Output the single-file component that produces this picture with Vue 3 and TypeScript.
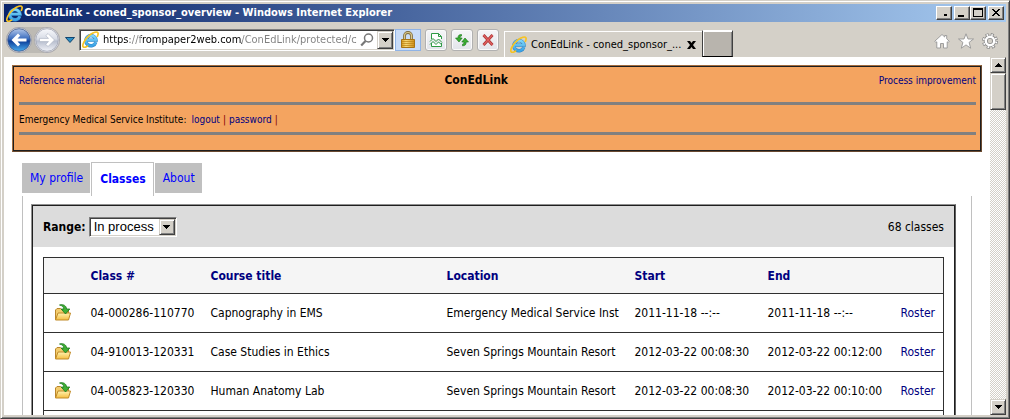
<script setup lang="ts">
import { ref } from 'vue'

interface ClassRow {
  id: string
  title: string
  location: string
  start: string
  end: string
}

const address = ref('https://frompaper2web.com/ConEdLink/protected/coned_sponsor_overview')
const range = ref('In process')
const activeTab = ref('Classes')
const tabs: string[] = ['My profile', 'Classes', 'About']

const rows: ClassRow[] = [
  { id: '04-000286-110770', title: 'Capnography in EMS', location: 'Emergency Medical Service Inst', start: '2011-11-18 --:--', end: '2011-11-18 --:--' },
  { id: '04-910013-120331', title: 'Case Studies in Ethics', location: 'Seven Springs Mountain Resort', start: '2012-03-22 00:08:30', end: '2012-03-22 00:12:00' },
  { id: '04-005823-120330', title: 'Human Anatomy Lab', location: 'Seven Springs Mountain Resort', start: '2012-03-22 00:08:30', end: '2012-03-22 00:10:00' },
]
</script>

<template>
  <svg class="defs" aria-hidden="true">
    <defs>
      <linearGradient id="ieBlue" x1="0" y1="0" x2="0" y2="1">
        <stop offset="0" stop-color="#7ed6f8" />
        <stop offset="1" stop-color="#3aa3e6" />
      </linearGradient>
      <linearGradient id="backBlue" x1="0" y1="0" x2="0" y2="1">
        <stop offset="0" stop-color="#b4c8ea" />
        <stop offset="0.45" stop-color="#3a6bbd" />
        <stop offset="0.55" stop-color="#0d3f9a" />
        <stop offset="1" stop-color="#4aaef0" />
      </linearGradient>
      <linearGradient id="fwdGrey" x1="0" y1="0" x2="0" y2="1">
        <stop offset="0" stop-color="#f8f9fc" />
        <stop offset="0.45" stop-color="#d8dce6" />
        <stop offset="0.55" stop-color="#b8bece" />
        <stop offset="1" stop-color="#f1f3f8" />
      </linearGradient>
      <linearGradient id="gold" x1="0" y1="0" x2="0" y2="1">
        <stop offset="0" stop-color="#fff3b0" />
        <stop offset="1" stop-color="#f5bd40" />
      </linearGradient>
      <linearGradient id="brass" x1="0" y1="0" x2="1" y2="0">
        <stop offset="0" stop-color="#d89a1c" />
        <stop offset="0.35" stop-color="#f9dc7c" />
        <stop offset="1" stop-color="#d08c14" />
      </linearGradient>
      <symbol id="ie" viewBox="0 0 16 16">
        <path d="M13 10.600A4.800 4.800 0 1 1 13.200 8.600H4.600" fill="none" stroke="#2f86c8" stroke-width="3.200" />
        <path d="M13 10.600A4.800 4.800 0 1 1 13.200 8.600H4.600" fill="none" stroke="url(#ieBlue)" stroke-width="2.300" />
        <path d="M5.200 14.200C3.400 15.400 1.900 15.700 1.200 15 -.3 13.500 2.600 7.500 7.200 3.800 10.800 1 14.200.2 15 1.700c.4.800.1 2-.5 3.300" fill="none" stroke="#f7c322" stroke-width="1.600" stroke-linecap="round" />
      </symbol>
    </defs>
  </svg>

  <div class="window">
    <header class="titlebar">
      <svg class="ie-icon"><use href="#ie" /></svg>
      <span class="title">ConEdLink - coned_sponsor_overview - Windows Internet Explorer</span>
      <div class="winbuttons">
        <button class="wb spaced" aria-label="Hide"><svg viewBox="0 0 12 10"><path d="M6 6h3v2H6z" /></svg></button>
        <button class="wb" aria-label="Minimize"><svg viewBox="0 0 12 10"><path d="M2 7h6v2H2z" /></svg></button>
        <button class="wb spaced" aria-label="Maximize"><svg viewBox="0 0 12 10"><path d="M1 0h10v9H1zM2 2v6h8V2z" fill-rule="evenodd" /></svg></button>
        <button class="wb" aria-label="Close"><svg viewBox="0 0 12 10"><path d="M2 1h2v1h1v1h2V2h1V1h2v1H9v1H8v1H7v1h1v1h1v1h1v1H8V7H7V6H5v1H4v1H2V7h1V6h1V5h1V4H4V3H3V2H2z" /></svg></button>
      </div>
    </header>

    <nav class="toolbar" aria-label="Browser">
      <div class="navpair">
        <button class="round" aria-label="Back">
          <svg viewBox="0 0 26 26"><circle cx="13" cy="13" r="12.500" fill="#f4f2f0" stroke="#8b8fa0" stroke-width=".8" /><circle cx="13" cy="13" r="11.300" fill="url(#backBlue)" stroke="#3c5688" stroke-width=".8" /><path d="M5.500 13l6.500-6.500 2.200 2.200-2.700 2.700H20.500v3.200h-9l2.700 2.700L12 19.500z" fill="#fff" /></svg>
        </button>
        <button class="round" aria-label="Forward">
          <svg viewBox="0 0 26 26"><circle cx="13" cy="13" r="12.500" fill="#f4f2f0" stroke="#9a9ca6" stroke-width=".8" /><circle cx="13" cy="13" r="11.300" fill="url(#fwdGrey)" stroke="#9aa0b0" stroke-width=".8" /><path d="M20.500 13L14 6.500l-2.200 2.200 2.700 2.700H5.500v3.200h9l-2.700 2.700 2.200 2.200z" fill="#fff" stroke="#a6adbd" stroke-width=".6" /></svg>
        </button>
      </div>
      <button class="recent" aria-label="Recent pages"><svg viewBox="0 0 10 6"><path d="M.5.5h9L5 5.500z" fill="#2c8fc4" stroke="#12456f" /></svg></button>
      <div class="address">
        <svg class="ie-icon"><use href="#ie" /></svg>
        <input v-model="address" class="url" type="text" aria-label="Address" />
        <button class="find" aria-label="Search"><svg viewBox="0 0 14 14"><circle cx="8.500" cy="5" r="4" fill="none" stroke="#777" stroke-width="1.500" /><path d="M5.500 8L1.200 12.500" stroke="#777" stroke-width="2.200" /></svg></button>
        <button class="arrow" aria-label="Show address list"><svg viewBox="0 0 7 4"><path d="M0 0h7v1H6v1H5v1H4v1H3V3H2V2H1V1H0z" /></svg></button>
      </div>
      <button class="lock" aria-label="Security report">
        <svg viewBox="0 0 16 18"><path d="M4.500 9V5a3.500 3.500 0 0 1 7 0v4" fill="none" stroke="#7d6a3c" stroke-width="2.800" /><path d="M4.500 9V5a3.500 3.500 0 0 1 7 0v4" fill="none" stroke="#d9c78c" stroke-width="1.200" /><path d="M1.500 8.500h13v8h-13z" fill="url(#brass)" stroke="#a87414" /><path d="M2 10.500h12M2 12.500h12M2 14.500h12" stroke="#b98213" stroke-opacity=".7" /></svg>
      </button>
      <div class="tools">
        <button class="tool" aria-label="Compatibility view"><svg viewBox="0 0 14 14"><path d="M2.500 6V.5h7l3 3V6M2.500 10v3.500h10V10M9.500.5v3h3" fill="#fff" stroke="#2e9a44" /><path d="M1 8.500L4 5.500l3 3 2.500-2.500 3.500 3.500M1 11.500l3-3 3 3 2.500-2.500 3.500 3" fill="none" stroke="#2e9a44" /></svg></button>
        <button class="tool" aria-label="Refresh"><svg viewBox="0 0 14 14"><path d="M6.500 1.500C4 1.500 3 2.500 3 5H.5L4 9l3.200-4H5c0-1.200.4-1.800 1.500-2z" fill="#3cae34" stroke="#167216" stroke-width=".6" /><path d="M7.500 12.800c2.500 0 3.700-1 3.700-3.800h2.300L10 5 6.800 9H9c0 1.200-.4 2-1.500 2.200z" fill="#3cae34" stroke="#167216" stroke-width=".6" /></svg></button>
        <button class="tool" aria-label="Stop"><svg viewBox="0 0 14 14"><path d="M2.500 2l9 10M11.500 2l-9 10" stroke="#a83434" stroke-width="2.800" /><path d="M2.500 2l9 10M11.500 2l-9 10" stroke="#e26060" stroke-width="1.200" /></svg></button>
      </div>
      <div class="browsertab">
        <svg class="ie-icon"><use href="#ie" /></svg>
        <span class="tabtitle">ConEdLink - coned_sponsor_...</span>
        <button class="closetab" aria-label="Close tab"><svg viewBox="0 0 9 8"><path d="M0 0h3l1.500 2L6 0h3L6 4l3 4H6L4.500 6 3 8H0l3-4z" /></svg></button>
      </div>
      <button class="newtab" aria-label="New tab"></button>
      <div class="commands">
        <button class="cmd" aria-label="Home"><svg viewBox="0 0 16 16"><path d="M8 1.500L.8 8.200l1 1.300 1-.7v6.200h3.700v-4.500h3V15h3.700V8.800l1 .7 1-1.300L12.700 5.800V2.500h-2v1.500z" fill="#fff" stroke="#969696" stroke-width=".9" /></svg></button>
        <button class="cmd" aria-label="Favorites"><svg viewBox="0 0 16 16"><path d="M8 .8l2 5.200h5.500l-4.400 3.400 1.600 5.800L8 11.900l-4.700 3.300 1.600-5.800L.5 6H6z" fill="#fff" stroke="#969696" stroke-width=".9" /></svg></button>
        <button class="cmd" aria-label="Tools"><svg viewBox="0 0 16 16"><circle cx="8" cy="8" r="6.400" fill="none" stroke="#8b8b8b" stroke-width="3.200" stroke-dasharray="2.900 2.126" /><circle cx="8" cy="8" r="4.200" fill="none" stroke="#8b8b8b" stroke-width="4" /><circle cx="8" cy="8" r="6.400" fill="none" stroke="#fff" stroke-width="1.800" stroke-dasharray="1.500 3.526" stroke-dashoffset="-.7" /><circle cx="8" cy="8" r="4.200" fill="none" stroke="#fff" stroke-width="2.400" /></svg></button>
      </div>
    </nav>

    <div class="viewport">
      <main class="page">
        <section class="banner">
          <div class="bannertop">
            <a href="#reference">Reference material</a>
            <h1>ConEdLink</h1>
            <a class="right" href="#improvement">Process improvement</a>
          </div>
          <hr />
          <div class="account">
            <span>Emergency Medical Service Institute:</span>
            <a href="#logout">logout</a>
            <span class="bar">|</span>
            <a href="#password">password</a>
            <span class="bar">|</span>
          </div>
          <hr />
        </section>

        <div class="tabs">
          <a v-for="tab in tabs" :key="tab" href="#tab" class="tab" :class="{ active: tab === activeTab }" @click.prevent="activeTab = tab">{{ tab }}</a>
        </div>

        <div class="tabbody">
          <section class="panel">
            <div class="filter">
              <label for="range">Range:</label>
              <div class="selectbox">
                <select id="range" v-model="range">
                  <option>In process</option>
                </select>
                <span class="arrow"><svg viewBox="0 0 7 4"><path d="M0 0h7v1H6v1H5v1H4v1H3V3H2V2H1V1H0z" /></svg></span>
              </div>
              <span class="count">68 classes</span>
            </div>
            <table>
              <colgroup>
                <col class="c-open" /><col class="c-id" /><col /><col class="c-loc" /><col class="c-date" /><col class="c-date" /><col class="c-roster" />
              </colgroup>
              <thead>
                <tr><th></th><th>Class #</th><th>Course title</th><th>Location</th><th>Start</th><th>End</th><th></th></tr>
              </thead>
              <tbody>
                <tr v-for="row in rows" :key="row.id">
                  <td>
                    <a href="#open" class="open" :aria-label="'Open ' + row.title">
                      <svg viewBox="0 0 17 17"><path d="M1.500 15.500V6L3 4.500h3.500L8 6h6.500v6z" fill="#f3cc6c" stroke="#b9862c" /><path d="M1.500 16L4 9h12.500L14.500 16z" fill="url(#gold)" stroke="#c08a28" /><path d="M5.500 1C9.500-.2 12.300 1.800 12.600 5h3.200l-4.300 5L7.200 5h2.600C9.700 3 8.200 1.600 5.500 1z" fill="#3fae35" stroke="#1c7a1c" stroke-width=".8" /></svg>
                    </a>
                  </td>
                  <td>{{ row.id }}</td>
                  <td>{{ row.title }}</td>
                  <td>{{ row.location }}</td>
                  <td>{{ row.start }}</td>
                  <td>{{ row.end }}</td>
                  <td><a href="#roster">Roster</a></td>
                </tr>
                <tr><td colspan="7"></td></tr>
              </tbody>
            </table>
          </section>
        </div>
      </main>

      <div class="scrollbar" aria-hidden="true">
        <div class="sb"><svg viewBox="0 0 7 4"><path d="M3 0h1v1h1v1h1v1h1v1H0V3h1V2h1V1h1z" /></svg></div>
        <div class="sb thumb"></div>
        <div class="sb down"><svg viewBox="0 0 7 4"><path d="M0 0h7v1H6v1H5v1H4v1H3V3H2V2H1V1H0z" /></svg></div>
      </div>
    </div>
  </div>
</template>

<style>
html,
body {
  margin: 0;
  height: 100%;
  overflow: hidden;
}
</style>

<style scoped>
.defs {
  position: absolute;
  width: 0;
  height: 0;
}
.window,
.window button,
.window input {
  font-family: 'DejaVu Sans Condensed', 'Noto Sans', sans-serif;
  font-size: 12px;
}
.window {
  box-sizing: border-box;
  height: 100vh;
  display: flex;
  flex-direction: column;
  padding: 3px;
  border: 1px solid;
  border-color: #d4d0c8 #404040 #404040 #d4d0c8;
  box-shadow: inset 1px 1px 0 #fff, inset -1px -1px 0 #808080;
  background: #d4d0c8;
  color: #000;
  line-height: 16px;
  white-space: nowrap;
}
button {
  padding: 0;
  border: 0;
  background: none;
  flex: none;
  display: flex;
  align-items: center;
  justify-content: center;
}
svg {
  display: block;
}
a {
  color: #000080;
  text-decoration: none;
}
.ie-icon {
  width: 17px;
  height: 17px;
  flex: none;
}

/* title bar */
.titlebar {
  display: flex;
  align-items: center;
  height: 18px;
  flex: none;
  padding: 0 2px;
  gap: 1px;
  background: linear-gradient(to right, #0a246a, #a6caf0);
}
.title {
  flex: 1;
  color: #fff;
  font-weight: bold;
  font-size: 11px;
}
.winbuttons {
  display: flex;
}
.wb {
  width: 16px;
  height: 14px;
  background: #d4d0c8;
  border: 1px solid;
  border-color: #fff #404040 #404040 #fff;
  box-shadow: inset -1px -1px 0 #808080;
}
.wb svg {
  width: 12px;
  height: 10px;
}
.wb.spaced {
  margin-right: 2px;
}

/* toolbar */
.toolbar {
  display: flex;
  align-items: center;
  height: 35px;
  flex: none;
  padding: 0 8px 0 2px;
}
.navpair {
  display: flex;
  gap: 2px;
  border-radius: 14px;
  background: #bdbab4;
}
.round svg {
  width: 26px;
  height: 26px;
}
.recent {
  width: 19px;
  height: 16px;
}
.recent svg {
  width: 10px;
  height: 6px;
}
.address {
  display: flex;
  align-items: center;
  box-sizing: border-box;
  flex: 0 1 316px;
  min-width: 0;
  height: 22px;
  padding: 1px 1px 1px 2px;
  border: 1px solid;
  border-color: #808080 #fff #fff #808080;
  box-shadow: inset 1px 1px 0 #404040, inset -1px -1px 0 #d4d0c8;
  background: #fff;
}
.window .url {
  flex: 1;
  min-width: 0;
  height: 18px;
  padding: 0;
  margin-left: 4px;
  border: 0;
  outline: 0;
  font-size: 11px;
  color: transparent;
  background: linear-gradient(to right, #000 0 27px, #808080 27px 38px, #000 38px 139px, #808080 139px);
  background-clip: text;
  -webkit-background-clip: text;
}
.find {
  width: 20px;
  height: 18px;
}
.find svg {
  width: 14px;
  height: 14px;
}
.arrow {
  display: flex;
  align-items: center;
  justify-content: center;
  box-sizing: border-box;
  width: 16px;
  height: 18px;
  background: #d4d0c8;
  border: 1px solid;
  border-color: #d4d0c8 #404040 #404040 #d4d0c8;
  box-shadow: inset 1px 1px 0 #fff, inset -1px -1px 0 #808080;
}
.arrow svg {
  width: 7px;
  height: 4px;
}
.lock {
  width: 26px;
  height: 22px;
  border: 1px solid #8fb3e6;
  background: #c9dcf8;
}
.lock svg {
  width: 16px;
  height: 18px;
}
.tools {
  display: flex;
  gap: 4px;
  margin: 0 5px 0 4px;
}
.tool {
  width: 22px;
  height: 22px;
  border: 1px solid #b1b1b1;
  border-radius: 3px;
  background: linear-gradient(#f6f6f8, #e2e4ea);
  box-shadow: inset 0 0 0 1px #fafafa;
}
.tool svg {
  width: 14px;
  height: 14px;
}
.browsertab {
  display: flex;
  align-items: center;
  align-self: flex-end;
  box-sizing: border-box;
  width: 198px;
  height: 26px;
  padding: 0 6px 0 5px;
  gap: 4px;
  border: 1px solid #fff;
  border-width: 1px 0 0 1px;
}
.tabtitle {
  flex: 1;
  font-size: 11px;
}
.closetab svg {
  width: 9px;
  height: 8px;
}
.newtab {
  align-self: flex-end;
  width: 31px;
  height: 27px;
  border: 1px solid;
  border-color: #fff #404040 #000 #404040;
  box-shadow: inset 1px 1px 0 #fff, inset -1px 0 0 #808080;
  background: #b8b4ad;
}
.commands {
  display: flex;
  gap: 8px;
  margin-left: auto;
  padding-top: 3px;
}
.cmd svg {
  width: 16px;
  height: 16px;
}

/* page */
.viewport {
  flex: 1;
  min-height: 0;
  display: flex;
  background: #fff;
}
.page {
  flex: 1;
  min-width: 0;
  overflow: hidden;
  padding: 8px 8px 0;
}
.banner {
  height: 87px;
  box-sizing: border-box;
  padding: 5px 5px 0 6px;
  border: 1px solid;
  border-color: #a06c40 #6a4a30 #6a4a30 #a06c40;
  box-shadow: inset 0 0 0 1px #1e1e1e;
  background: #f4a460;
  font-size: 10px;
}
.bannertop {
  display: grid;
  grid-template-columns: 10fr auto 11fr;
  height: 31px;
  line-height: 20px;
}
.bannertop .right {
  text-align: right;
}
h1 {
  margin: 0;
  font-size: 12px;
  line-height: 18px;
}
hr {
  height: 3px;
  margin: 0;
  border: 0;
  background: #808080;
}
.account {
  display: flex;
  gap: 3px;
  height: 27px;
  line-height: 30px;
}
.account span:first-child {
  margin-right: 2px;
}
.bar {
  color: #800000;
}
.tabs {
  display: flex;
  align-items: flex-start;
  gap: 1px;
  margin: 10px 10px 0;
  height: 34px;
}
.tab {
  margin-top: 1px;
  padding: 0 7px 0 8px;
  line-height: 30px;
  background: #c0c0c0;
  color: #00f;
}
.tab.active {
  margin-top: 0;
  border: 1px solid #c0c0c0;
  border-bottom: 0;
  line-height: 33px;
  background: #fff;
  font-weight: bold;
}
.tabbody {
  margin: 0 10px;
  padding: 8px 15px 0 8px;
  border: 1px solid #c0c0c0;
  border-width: 0 1px;
}
.panel {
  border: 1px solid;
  border-color: #909090 #606060 #606060 #909090;
  box-shadow: inset 0 0 0 1px #1e1e1e;
  padding: 1px;
  height: 400px;
}
.filter {
  display: flex;
  align-items: center;
  height: 41px;
  padding: 0 10px;
  gap: 3px;
  background: #dcdcdc;
}
label {
  font-weight: bold;
}
.selectbox {
  display: flex;
  border: 1px solid;
  border-color: #808080 #fff #fff #808080;
  box-shadow: inset 1px 1px 0 #404040, inset -1px -1px 0 #d4d0c8;
  padding: 1px;
  background: #fff;
}
select {
  appearance: none;
  width: 68px;
  height: 16px;
  padding: 0 0 0 3px;
  border: 0;
  background: none;
  color: #000;
  font-family: 'Liberation Sans', Arial, sans-serif;
  font-size: 13px;
}
.selectbox .arrow {
  height: 16px;
  pointer-events: none;
}
.count {
  margin-left: auto;
}
table {
  table-layout: fixed;
  width: calc(100% - 20px);
  margin: 10px 10px 0;
  border-collapse: collapse;
  border: 1px solid #303030;
}
th,
td {
  height: 39px;
  padding: 0 0 1px 10px;
  box-sizing: border-box;
  border-bottom: 1px solid #303030;
  text-align: left;
}
th {
  height: 36px;
  padding-bottom: 0;
  background: #f5f5f5;
  color: #000080;
}
.open svg {
  width: 17px;
  height: 17px;
}
.c-open {
  width: 37px;
}
.c-id {
  width: 120px;
}
.c-loc {
  width: 188px;
}
.c-date {
  width: 133px;
}
.c-roster {
  width: 53px;
}

/* scrollbar */
.scrollbar {
  display: flex;
  flex-direction: column;
  width: 16px;
  background: repeating-conic-gradient(#fff 0 25%, #d4d0c8 0 50%) 0 0 / 2px 2px;
}
.sb {
  display: flex;
  align-items: center;
  justify-content: center;
  box-sizing: border-box;
  height: 16px;
  background: #d4d0c8;
  border: 1px solid;
  border-color: #d4d0c8 #404040 #404040 #d4d0c8;
  box-shadow: inset 1px 1px 0 #fff, inset -1px -1px 0 #808080;
}
.sb svg {
  width: 7px;
  height: 4px;
}
.thumb {
  height: 37px;
}
.down {
  margin-top: auto;
}
</style>
